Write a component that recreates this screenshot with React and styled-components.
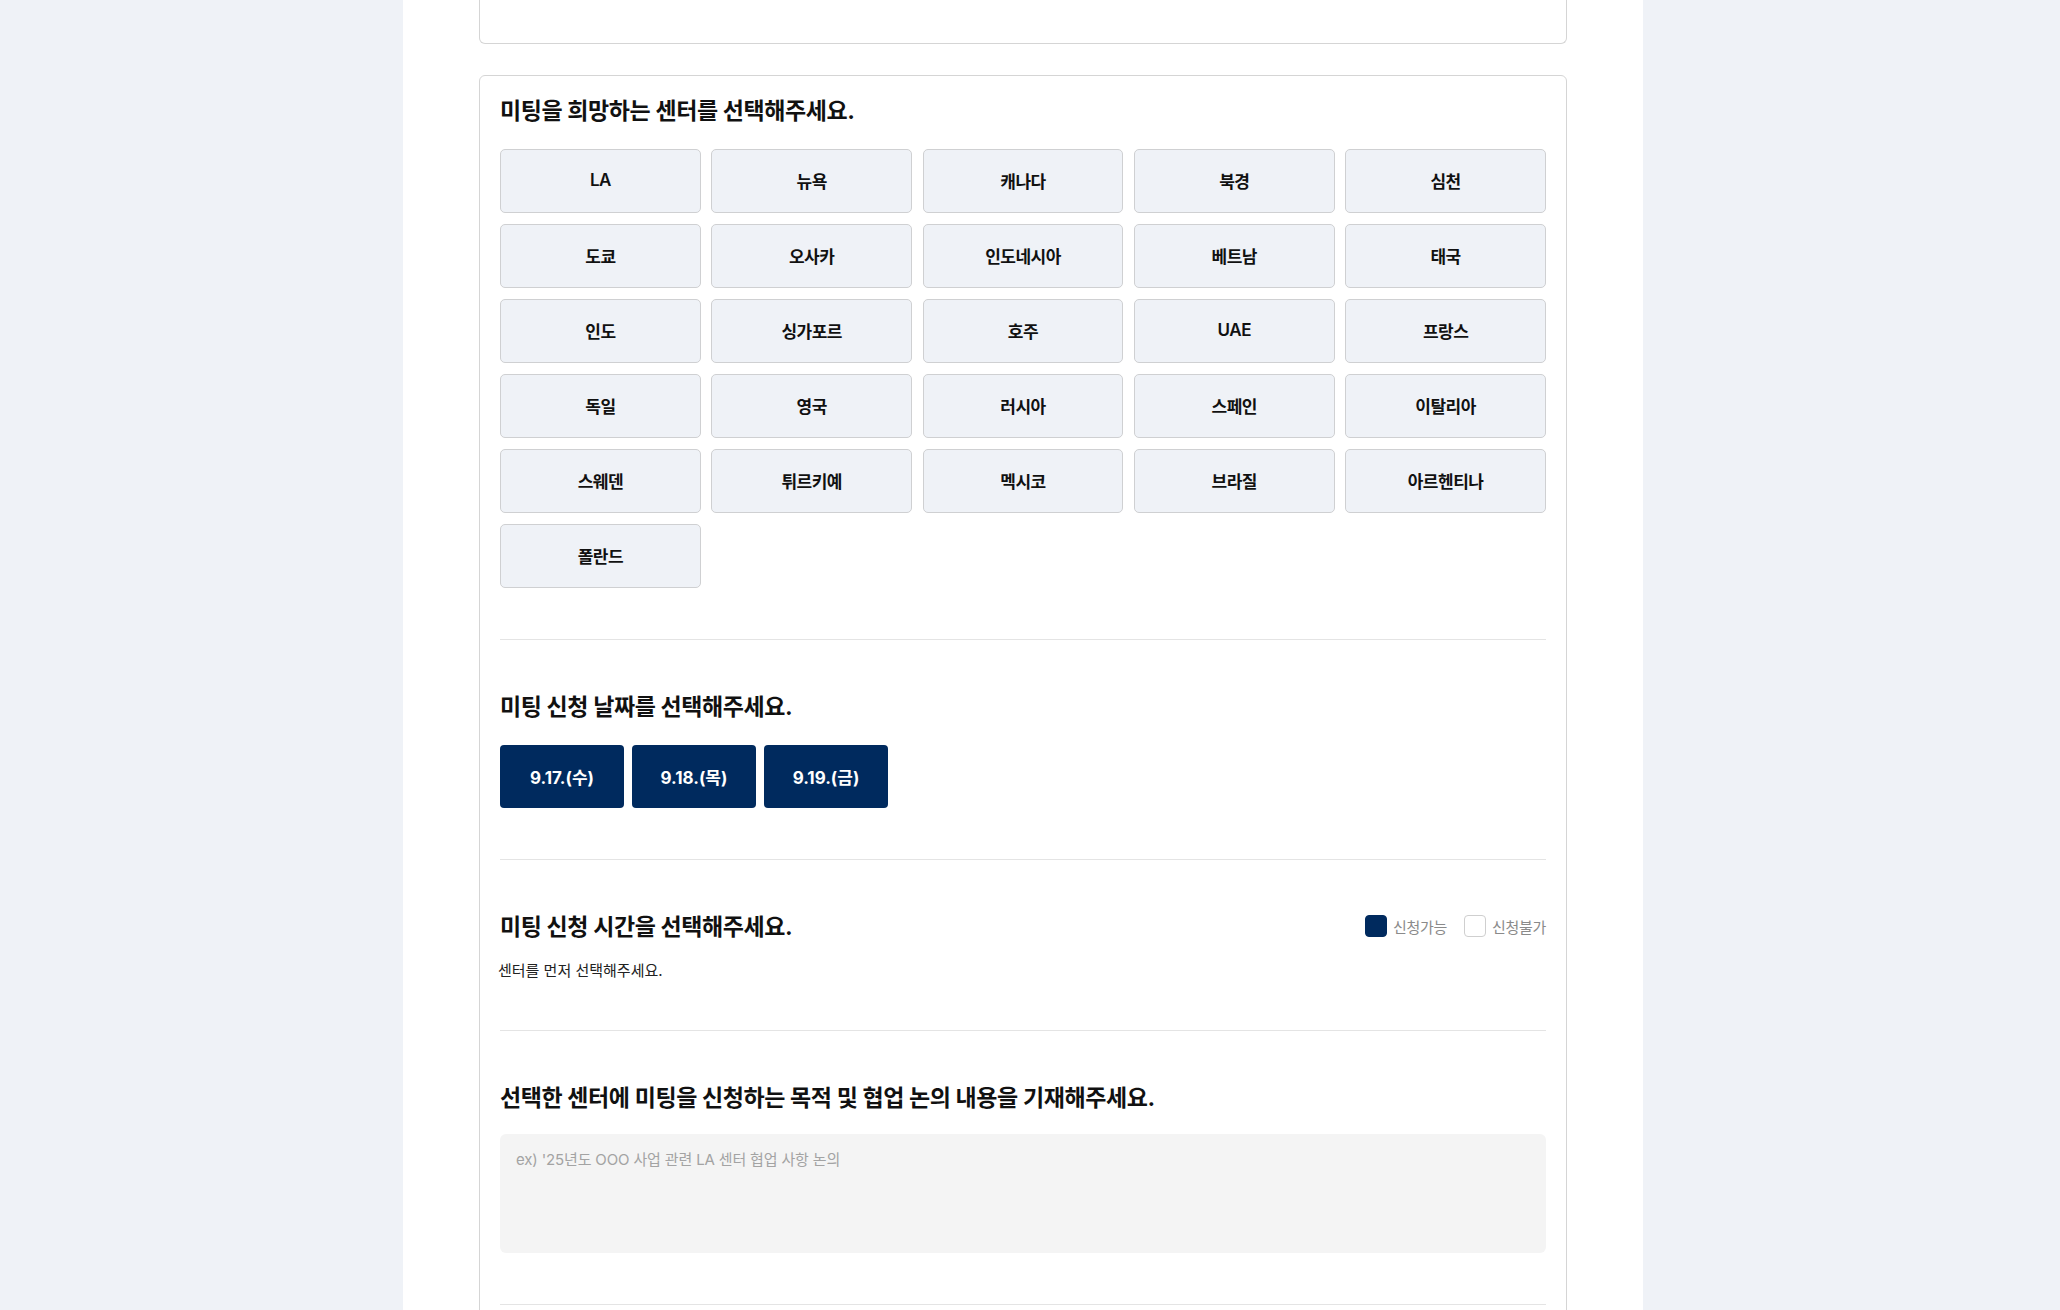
import React from "react";
import styled, { createGlobalStyle } from "styled-components";

const GlobalStyle = createGlobalStyle`
  html, body {
    margin: 0;
    padding: 0;
    height: 100%;
    overflow: hidden;
    background: #eff2f7;
    font-family: Inter, "Noto Sans CJK KR", sans-serif;
    color: #111;
  }
  * { box-sizing: border-box; }
`;

const Page = styled.div`
  display: flex;
  justify-content: center;
  padding-right: 14px;
  height: 100vh;
`;

const Column = styled.main`
  width: 1240px;
  height: 100%;
  background: #ffffff;
  padding: 0 76px;
  display: flex;
  flex-direction: column;
`;

const TopCard = styled.div`
  height: 44px;
  flex-shrink: 0;
  border: 1px solid #d5d5d5;
  border-top: none;
  border-radius: 0 0 6px 6px;
  margin-bottom: 31px;
`;

const Card = styled.div`
  border: 1px solid #d5d5d5;
  border-radius: 6px;
  padding: 20px 20px 0;
  flex: 1;
  min-height: 1400px;
`;

const Section = styled.section`
  padding: ${(p) => (p.$first ? "0" : "52px")} 0 ${(p) => p.$pb ?? 51}px;
  border-bottom: 1px solid #e4e4e4;
`;

const Title = styled.h2`
  margin: 0 0 ${(p) => p.$mb ?? 22}px;
  font-size: 23px;
  line-height: 31px;
  font-weight: 700;
  letter-spacing: -0.4px;
  color: #111;
`;

const HeaderRow = styled.div`
  display: flex;
  align-items: center;
  justify-content: space-between;
  margin-bottom: 18px;
`;

const CenterGrid = styled.div`
  display: grid;
  grid-template-columns: repeat(5, 1fr);
  column-gap: 10.5px;
  row-gap: 11px;
`;

const CenterButton = styled.button`
  height: 64px;
  border: 1px solid #cfd0d2;
  border-radius: 5px;
  background: #eff2f7;
  font-family: inherit;
  font-size: 17px;
  font-weight: 600;
  letter-spacing: -0.5px;
  color: #111;
  cursor: pointer;
  padding: 0 0 2px;
`;

const DateRow = styled.div`
  display: flex;
  gap: 8px;
`;

const DateButton = styled.button`
  width: 124px;
  height: 63px;
  border: none;
  border-radius: 4px;
  background: #002a5e;
  color: #ffffff;
  font-family: inherit;
  font-size: 17px;
  font-weight: 700;
  letter-spacing: 0;
  cursor: pointer;
  padding: 0;
`;

const Legend = styled.div`
  display: flex;
  align-items: center;
  gap: 17px;
  margin-bottom: 3px;
`;

const LegendItem = styled.div`
  display: flex;
  align-items: center;
  gap: 6px;
  font-size: 15px;
  letter-spacing: -0.3px;
  color: #8a8a8a;
`;

const Swatch = styled.span`
  width: 22px;
  height: 22px;
  border-radius: 4px;
  background: ${(p) => (p.$filled ? "#002a5e" : "#ffffff")};
  border: 1px solid ${(p) => (p.$filled ? "#002a5e" : "#cfcfcf")};
`;

const Note = styled.p`
  margin: 0 0 0 -2px;
  font-size: 15px;
  line-height: 20px;
  color: #222;
`;

const Purpose = styled.textarea`
  display: block;
  width: 100%;
  height: 119px;
  border: none;
  border-radius: 6px;
  background: #f4f4f4;
  padding: 15px 16px;
  resize: none;
  font-family: inherit;
  font-size: 15px;
  line-height: 22px;
  letter-spacing: -0.15px;
  color: #222;
  outline: none;
  &::placeholder {
    color: #a3a3a3;
  }
`;

const centers = [
  "LA", "뉴욕", "캐나다", "북경", "심천",
  "도쿄", "오사카", "인도네시아", "베트남", "태국",
  "인도", "싱가포르", "호주", "UAE", "프랑스",
  "독일", "영국", "러시아", "스페인", "이탈리아",
  "스웨덴", "튀르키예", "멕시코", "브라질", "아르헨티나",
  "폴란드",
];

const dates = ["9.17.(수)", "9.18.(목)", "9.19.(금)"];

export default function App() {
  return (
    <>
      <GlobalStyle />
      <Page>
        <Column>
          <TopCard />
          <Card>
            <Section $first>
              <Title>미팅을 희망하는 센터를 선택해주세요.</Title>
              <CenterGrid>
                {centers.map((c) => (
                  <CenterButton key={c} type="button">{c}</CenterButton>
                ))}
              </CenterGrid>
            </Section>
            <Section>
              <Title $mb={22}>미팅 신청 날짜를 선택해주세요.</Title>
              <DateRow>
                {dates.map((d) => (
                  <DateButton key={d} type="button">{d}</DateButton>
                ))}
              </DateRow>
            </Section>
            <Section $pb={49}>
              <HeaderRow>
                <Title $mb={0}>미팅 신청 시간을 선택해주세요.</Title>
                <Legend>
                  <LegendItem>
                    <Swatch $filled />
                    신청가능
                  </LegendItem>
                  <LegendItem>
                    <Swatch />
                    신청불가
                  </LegendItem>
                </Legend>
              </HeaderRow>
              <Note>센터를 먼저 선택해주세요.</Note>
            </Section>
            <Section>
              <Title $mb={20}>선택한 센터에 미팅을 신청하는 목적 및 협업 논의 내용을 기재해주세요.</Title>
              <Purpose placeholder="ex) '25년도 OOO 사업 관련 LA 센터 협업 사항 논의" />
            </Section>
          </Card>
        </Column>
      </Page>
    </>
  );
}
